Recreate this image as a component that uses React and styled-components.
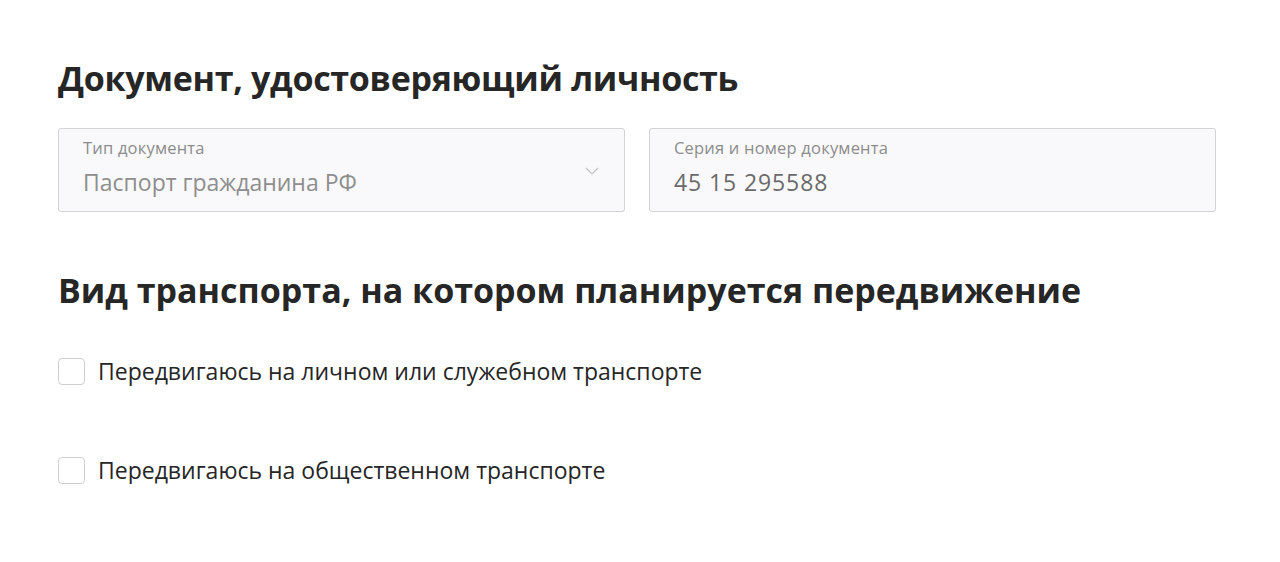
import React from "react"
import styled, { createGlobalStyle } from "styled-components"

const GlobalStyle = createGlobalStyle`
  body {
    margin: 0;
    background: #fff;
    font-family: "Open Sans", "Liberation Sans", sans-serif;
    color: #222;
  }
`

const Page = styled.div`
  padding: 52px 64px 0 58px;
  width: 1158px;
`

const Section = styled.section`
  margin-bottom: ${p => p.gap || 0}px;
`

const Title = styled.h2`
  margin: 0 0 ${p => p.below || 0}px;
  font-size: 34px;
  line-height: 52px;
  font-weight: 700;
  letter-spacing: ${p => p.spacing || 0}px;
  color: #262626;
`

const FieldRow = styled.div`
  display: grid;
  grid-template-columns: 1fr 1fr;
  gap: 24px;
`

const Field = styled.div`
  position: relative;
  height: 84px;
  box-sizing: border-box;
  border: 1px solid #d3d3d6;
  border-radius: 3px;
  background: #f9f9fb;
  padding: 8px 24px 0;
`

const Label = styled.div`
  font-size: 16.5px;
  line-height: 22px;
  color: #8c8c8c;
  letter-spacing: 0.2px;
`

const Value = styled.div`
  margin-top: 7px;
  font-size: 23px;
  line-height: 32px;
  letter-spacing: ${p => (p.muted ? 0 : 0.9)}px;
  color: ${p => (p.muted ? "#8e8e8e" : "#6a6a6a")};
`

const Chevron = styled.svg`
  position: absolute;
  right: 25px;
  top: 38px;
`

const CheckList = styled.div`
  display: flex;
  flex-direction: column;
  gap: 71px;
`

const CheckRow = styled.label`
  display: flex;
  align-items: center;
  gap: 13px;
  font-size: 23px;
  line-height: 28px;
  color: #262626;
`

const Box = styled.span`
  width: 27px;
  height: 27px;
  flex: none;
  box-sizing: border-box;
  border: 1px solid #cfcfd2;
  border-radius: 4px;
  background: #fff;
`

const App = () => {
  return (
    <>
      <GlobalStyle />
      <Page>
        <Section gap={52}>
          <Title below={24} spacing={-0.3}>Документ, удостоверяющий личность</Title>
          <FieldRow>
            <Field>
              <Label>Тип документа</Label>
              <Value muted>Паспорт гражданина РФ</Value>
              <Chevron width="14" height="8" viewBox="0 0 14 8">
                <path d="M1 1l6 6 6-6" fill="none" stroke="#c4c4c8" strokeWidth="1.2" />
              </Chevron>
            </Field>
            <Field>
              <Label>Серия и номер документа</Label>
              <Value>45 15 295588</Value>
            </Field>
          </FieldRow>
        </Section>
        <Section>
          <Title below={41}>Вид транспорта, на котором планируется передвижение</Title>
          <CheckList>
            <CheckRow>
              <Box />
              Передвигаюсь на личном или служебном транспорте
            </CheckRow>
            <CheckRow>
              <Box />
              Передвигаюсь на общественном транспорте
            </CheckRow>
          </CheckList>
        </Section>
      </Page>
    </>
  )
}

export default App
